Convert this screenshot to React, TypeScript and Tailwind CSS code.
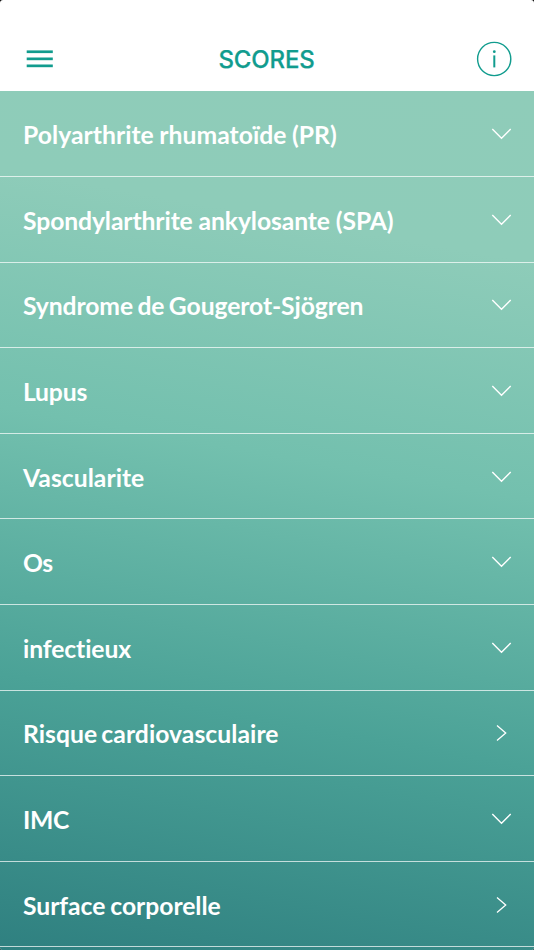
import React from "react"

type TScore = {
  label: string
  kind: "group" | "link"
  tracking: string
}

const SCORES: TScore[] = [
  {
    label: "Polyarthrite rhumatoïde (PR)",
    kind: "group",
    tracking: "tracking-[0.04px] [word-spacing:-0.6px]",
  },
  {
    label: "Spondylarthrite ankylosante (SPA)",
    kind: "group",
    tracking: "tracking-[-0.1px]",
  },
  {
    label: "Syndrome de Gougerot-Sjögren",
    kind: "group",
    tracking: "tracking-[-0.09px] [word-spacing:-1.5px]",
  },
  { label: "Lupus", kind: "group", tracking: "tracking-[-0.2px]" },
  { label: "Vascularite", kind: "group", tracking: "tracking-[0.04px]" },
  { label: "Os", kind: "group", tracking: "tracking-[-0.6px]" },
  { label: "infectieux", kind: "group", tracking: "tracking-[-0.1px]" },
  {
    label: "Risque cardiovasculaire",
    kind: "link",
    tracking: "tracking-[0.06px] [word-spacing:-2px]",
  },
  { label: "IMC", kind: "group", tracking: "tracking-[-0.3px]" },
  {
    label: "Surface corporelle",
    kind: "link",
    tracking: "tracking-[-0.04px] [word-spacing:-1px]",
  },
]

const App = () => {
  return (
    <div className="bg-black">
      <main className="flex h-[950px] w-full flex-col overflow-hidden rounded-t-[3px] rounded-b-[2px] bg-white">
        <Header />
        <ScoreList />
      </main>
    </div>
  )
}

export default App

const Header = () => {
  return (
    <header className="flex h-[91px] shrink-0 items-end justify-between pr-[22px] pb-[14px] pl-[26px] text-[#119c8e]">
      <button
        type="button"
        aria-label="Menu"
        className="flex h-9 w-[31px] items-center"
      >
        <MenuIcon />
      </button>

      <h1 className="font-['Inter',sans-serif] text-[24px] leading-[34px] font-medium tracking-[-0.15px] [-webkit-text-stroke:0.25px_currentColor]">
        SCORES
      </h1>

      <button type="button" aria-label="Informations">
        <InfoIcon />
      </button>
    </header>
  )
}

const ScoreList = () => {
  return (
    <ul className="flex-1 bg-[linear-gradient(190deg,#8fccb9_0%,#8eccb9_18%,#73c0ae_43%,#4ba297_71%,#2f8080_100%)] pt-[0.5px]">
      {SCORES.map((score) => (
        <ScoreRow key={score.label} {...score} />
      ))}
    </ul>
  )
}

const ScoreRow = ({ label, kind, tracking }: TScore) => {
  return (
    <li className="flex h-[85.6px] items-center justify-between border-b border-white/70 pr-[22px] pl-[23px] text-white">
      <span
        className={`pt-[2.8px] font-['Lato',sans-serif] text-[24.7px] leading-8 font-bold ${tracking}`}
      >
        {label}
      </span>
      {kind === "group" ? <ChevronDown /> : <ChevronRight />}
    </li>
  )
}

const MenuIcon = () => (
  <svg width="28" height="20" viewBox="0 0 28 20" fill="currentColor">
    <rect x="0.7" y="1.4" width="26.1" height="2.7" />
    <rect x="0.7" y="8.5" width="26.1" height="2.7" />
    <rect x="0.7" y="15.5" width="26.1" height="2.7" />
  </svg>
)

const InfoIcon = () => (
  <svg width="36" height="36" viewBox="0 0 36 36" fill="none">
    <circle cx="18.2" cy="18" r="16.6" stroke="currentColor" strokeWidth="1.4" />
    <circle cx="18.3" cy="10.7" r="1.4" fill="currentColor" />
    <path d="M18.3 14.4V26.4" stroke="currentColor" strokeWidth="2" />
  </svg>
)

const ChevronDown = () => (
  <svg
    className="mt-[1px]"
    width="21"
    height="12"
    viewBox="0 0 21 12"
    fill="none"
  >
    <path d="M1.3 1L10.5 10.3L19.7 1" stroke="currentColor" strokeWidth="1.4" />
  </svg>
)

const ChevronRight = () => (
  <svg
    className="mt-[1px]"
    width="21"
    height="18"
    viewBox="0 0 21 18"
    fill="none"
  >
    <path d="M6 1.6L14.7 9L6 16.4" stroke="currentColor" strokeWidth="1.3" />
  </svg>
)
